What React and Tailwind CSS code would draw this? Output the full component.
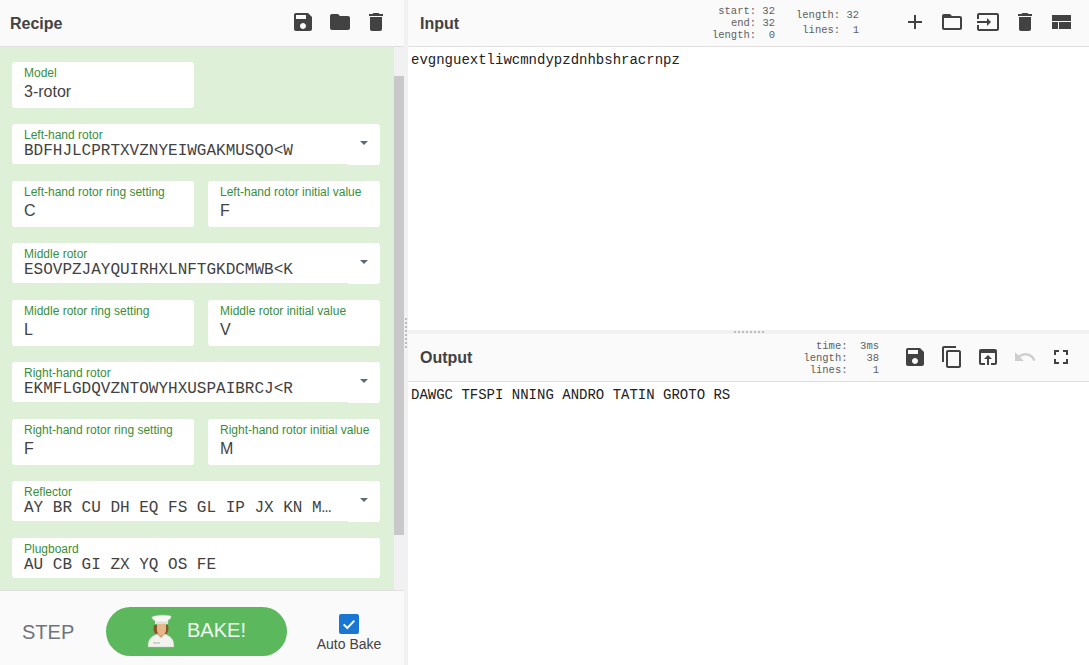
const P = {
  save: "M17 3H5c-1.11 0-2 .9-2 2v14c0 1.1.89 2 2 2h14c1.1 0 2-.9 2-2V7l-4-4zm-5 16c-1.66 0-3-1.34-3-3s1.34-3 3-3 3 1.34 3 3-1.34 3-3 3zm3-10H5V5h10v4z",
  folder: "M10 4H4c-1.1 0-1.99.9-1.99 2L2 18c0 1.1.9 2 2 2h16c1.1 0 2-.9 2-2V8c0-1.1-.9-2-2-2h-8l-2-2z",
  del: "M6 19c0 1.1.9 2 2 2h8c1.1 0 2-.9 2-2V7H6v12zM19 4h-3.5l-1-1h-5l-1 1H5v2h14V4z",
  add: "M19 13h-6v6h-2v-6H5v-2h6V5h2v6h6v2z",
  open: "M20 6h-8l-2-2H4c-1.1 0-1.99.9-1.99 2L2 18c0 1.1.9 2 2 2h16c1.1 0 2-.9 2-2V8c0-1.1-.9-2-2-2zm0 12H4V8h16v10z",
  input: "M21 3.01H3c-1.1 0-2 .9-2 2V9h2V4.99h18v14.03H3V15H1v4.01c0 1.1.9 1.98 2 1.98h18c1.1 0 2-.88 2-1.98v-14c0-1.11-.9-2-2-2zM11 16l4-4-4-4v3H1v2h10v3z",
  layout: "M3 19h6v-7H3v7zm7 0h12v-7H10v7zM3 5v6h19V5H3z",
  copy: "M16 1H4c-1.1 0-2 .9-2 2v14h2V3h12V1zm3 4H8c-1.1 0-2 .9-2 2v14c0 1.1.9 2 2 2h11c1.1 0 2-.9 2-2V7c0-1.1-.9-2-2-2zm0 16H8V7h11v14z",
  browser: "M19 4H5c-1.11 0-2 .9-2 2v12c0 1.1.89 2 2 2h4v-2H5V8h14v10h-4v2h4c1.1 0 2-.9 2-2V6c0-1.1-.9-2-2-2zm-7 6l-4 4h3v6h2v-6h3l-4-4z",
  undo: "M12.5 8c-2.65 0-5.05.99-6.9 2.6L2 7v9h9l-3.62-3.62c1.39-1.16 3.16-1.88 5.12-1.88 3.54 0 6.55 2.31 7.6 5.5l2.37-.78C21.08 11.03 17.15 8 12.5 8z",
  full: "M7 14H5v5h5v-2H7v-3zm-2-4h2V7h3V5H5v5zm12 7h-3v2h5v-5h-2v3zM14 5v2h3v3h2V5h-5z",
};

const Icon = ({ d, className = "text-[#424242]" }) => (
  <svg viewBox="0 0 24 24" width="24" height="24" fill="currentColor" className={className}>
    <path d={d} />
  </svg>
);

const Field = ({ label, value, className = "" }) => (
  <div className={`h-[46px] bg-white rounded-[3px] pl-3 pt-[3px] ${className}`}>
    <div className="text-[12px] leading-[16px] text-[#388e3c]">{label}</div>
    <div className="text-[16px] leading-[24px] -mt-[1px] text-[#424242]">{value}</div>
  </div>
);

const SelectField = ({ label, value }) => (
  <div className="h-[41px] flex items-start">
    <div className="w-[336px] h-[40px] bg-white rounded-l-[3px] pl-3 pt-[3px]">
      <div className="text-[12px] leading-[16px] text-[#388e3c]">{label}</div>
      <div className="font-['Liberation_Mono',monospace] text-[16px] leading-[16px] text-[#424242] whitespace-nowrap w-[310px]">{value}</div>
    </div>
    <div className="w-[32px] h-[41px] bg-white rounded-r-[3px] flex items-center justify-center pb-[3px]">
      <div className="w-0 h-0 border-x-[4px] border-x-transparent border-t-[4px] border-t-[#5f6a77]" />
    </div>
  </div>
);

const Chef = () => (
  <svg viewBox="0 0 32 34" width="32" height="34" className="shrink-0 -mt-[2px]">
    <path d="M3 33c0-7 2-10 9-13h8c7 3 9 6 9 13z" fill="#f2f3ee" stroke="#b9c4b4" strokeWidth=".5" />
    <path d="M12 20l4 4 4-4-2-3h-4z" fill="#d8a070" />
    <path d="M9 11c-1 5 0 8 2 9l3-1h4l3 1c2-1 3-4 2-9z" fill="#8a5528" />
    <path d="M12 9h9v6c0 4-2 6-4.500 6S12 19 12 15z" fill="#e8b688" />
    <path d="M7 3c3-2 14-2.500 19-1 .5 1.500-1 3.500-3 4v3H10V6.500C8 6 7 4.500 7 3z" fill="#f8f8f4" stroke="#c9d2c4" strokeWidth=".5" />
    <path d="M10 7.500h13V10H10z" fill="#dfe2da" />
    <path d="M8 29h7" stroke="#aab3a5" strokeWidth="1" />
  </svg>
);

const Stat = ({ lines, className = "" }) => (
  <div className={`font-['Liberation_Mono',monospace] text-[10.5px] text-[#5f5f5f] whitespace-pre text-right ${className}`}>
    {lines.map((l) => <div key={l}>{l}</div>)}
  </div>
);

const Dots = ({ className }) => (
  <div className={`flex gap-[2px] ${className}`}>
    {[0, 1, 2, 3, 4, 5, 6, 7].map((i) => <div key={i} className="w-[2px] h-[2px] bg-[#bdbdbd]" />)}
  </div>
);

export default function App() {
  return (
    <div className="w-[1089px] h-[665px] flex overflow-hidden bg-white font-['Liberation_Sans',sans-serif]">
      {/* Recipe */}
      <div className="w-[404px] h-full flex flex-col">
        <div className="h-[47px] shrink-0 bg-[#fafafa] border-b border-[#dfdfdf] flex items-center pl-[10px] pr-[16px]">
          <div className="text-[16px] font-bold text-[#424242] flex-1 mt-[1px]">Recipe</div>
          <div className="flex gap-[12.5px] -mt-[3px]">
            <Icon d={P.save} />
            <Icon d={P.folder} />
            <Icon d={P.del} />
          </div>
        </div>
        <div className="flex-1 flex min-h-0 bg-[#dff0d8]">
          <div className="w-[394px] shrink-0 pl-3 pr-[14px] pt-[15px] flex flex-col gap-4">
            <Field label="Model" value="3-rotor" className="w-[182px]" />
            <SelectField label="Left-hand rotor" value="BDFHJLCPRTXVZNYEIWGAKMUSQO<W" />
            <div className="flex gap-[14px]">
              <Field label="Left-hand rotor ring setting" value="C" className="w-[182px]" />
              <Field label="Left-hand rotor initial value" value="F" className="w-[172px]" />
            </div>
            <SelectField label="Middle rotor" value="ESOVPZJAYQUIRHXLNFTGKDCMWB<K" />
            <div className="flex gap-[14px]">
              <Field label="Middle rotor ring setting" value="L" className="w-[182px]" />
              <Field label="Middle rotor initial value" value="V" className="w-[172px]" />
            </div>
            <SelectField label="Right-hand rotor" value="EKMFLGDQVZNTOWYHXUSPAIBRCJ<R" />
            <div className="flex gap-[14px]">
              <Field label="Right-hand rotor ring setting" value="F" className="w-[182px]" />
              <Field label="Right-hand rotor initial value" value="M" className="w-[172px]" />
            </div>
            <SelectField label="Reflector" value="AY BR CU DH EQ FS GL IP JX KN M…" />
            <div className="h-[40px] bg-white rounded-[3px] pl-3 pt-[3px]">
              <div className="text-[12px] leading-[16px] text-[#388e3c]">Plugboard</div>
              <div className="font-['Liberation_Mono',monospace] text-[16px] leading-[16px] text-[#424242]">AU CB GI ZX YQ OS FE</div>
            </div>
          </div>
          <div className="w-[10px] shrink-0 flex flex-col bg-[#f1f1f1]">
            <div className="h-[29px] shrink-0" />
            <div className="h-[459px] shrink-0 bg-[#c8c8c8]" />
          </div>
        </div>
        <div className="h-[75px] shrink-0 bg-[#fafafa] border-t border-[#dfdfdf] flex items-center">
          <div className="w-[106px] pl-[22px] text-[20px] text-[#6c757d] shrink-0 mt-[8px]">STEP</div>
          <div className="w-[181px] h-[49px] shrink-0 rounded-full bg-[#5cb85c] flex items-center justify-center gap-[10px] text-[20px] mt-[7px] pr-[2px]">
            <Chef />
            <span className="text-[#f1f9f1] -mt-[4px]">BAKE!</span>
          </div>
          <div className="flex-1 flex flex-col items-center pl-[7px] mt-[9px]">
            <div className="w-5 h-5 mt-[2px] rounded-[2px] bg-[#1976d2] flex items-center justify-center">
              <svg viewBox="0 0 24 24" width="16" height="16" fill="none" stroke="white" strokeWidth="3"><path d="M4 12.500l5.500 5.500L20 7" /></svg>
            </div>
            <div className="text-[14px] leading-[20px] text-[#424242]">Auto Bake</div>
          </div>
        </div>
      </div>

      {/* Gutter */}
      <div className="w-[4px] h-full shrink-0 bg-[#f1f1f1] flex items-center justify-center">
        <Dots className="flex-col" />
      </div>

      {/* Right */}
      <div className="flex-1 min-w-0 h-full flex flex-col">
        <div className="h-[330px] shrink-0 flex flex-col">
          <div className="h-[47px] shrink-0 bg-[#fafafa] border-b border-[#dfdfdf] flex items-center pl-3 pr-[16px]">
            <div className="text-[16px] font-bold text-[#424242] flex-1 mt-[1px]">Input</div>
            <Stat lines={["start: 32", "end: 32", "length:  0"]} className="leading-[12px]" />
            <Stat lines={["length: 32", "lines:  1"]} className="leading-[15px] ml-[21px]" />
            <div className="flex gap-[12.5px] ml-[44px] -mt-[3px]">
              <Icon d={P.add} />
              <Icon d={P.open} />
              <Icon d={P.input} />
              <Icon d={P.del} />
              <Icon d={P.layout} />
            </div>
          </div>
          <div className="flex-1 px-[3px] pt-[5px] font-['Liberation_Mono',monospace] text-[14px] leading-[17px] text-[#212121]">evgnguextliwcmndypzdnhbshracrnpz</div>
        </div>
        <div className="h-[4px] shrink-0 bg-[#f1f1f1] flex justify-center">
          <Dots className="mt-[1px] h-[2px]" />
        </div>
        <div className="flex-1 min-h-0 flex flex-col">
          <div className="h-[48px] shrink-0 bg-[#fafafa] border-b border-[#dfdfdf] flex items-center pl-3 pr-[16px]">
            <div className="text-[16px] font-bold text-[#424242] flex-1 mt-[1px]">Output</div>
            <Stat lines={["time:  3ms", "length:   38", "lines:    1"]} className="leading-[12px]" />
            <div className="flex gap-[12.5px] ml-[24px] -mt-[2px]">
              <Icon d={P.save} />
              <Icon d={P.copy} />
              <Icon d={P.browser} />
              <Icon d={P.undo} className="text-[#cfcfcf]" />
              <Icon d={P.full} />
            </div>
          </div>
          <div className="flex-1 px-[3px] pt-[5px] font-['Liberation_Mono',monospace] text-[14px] leading-[17px] text-[#212121] whitespace-pre">DAWGC TFSPI NNING ANDRO TATIN GROTO RS</div>
        </div>
      </div>
    </div>
  );
}
